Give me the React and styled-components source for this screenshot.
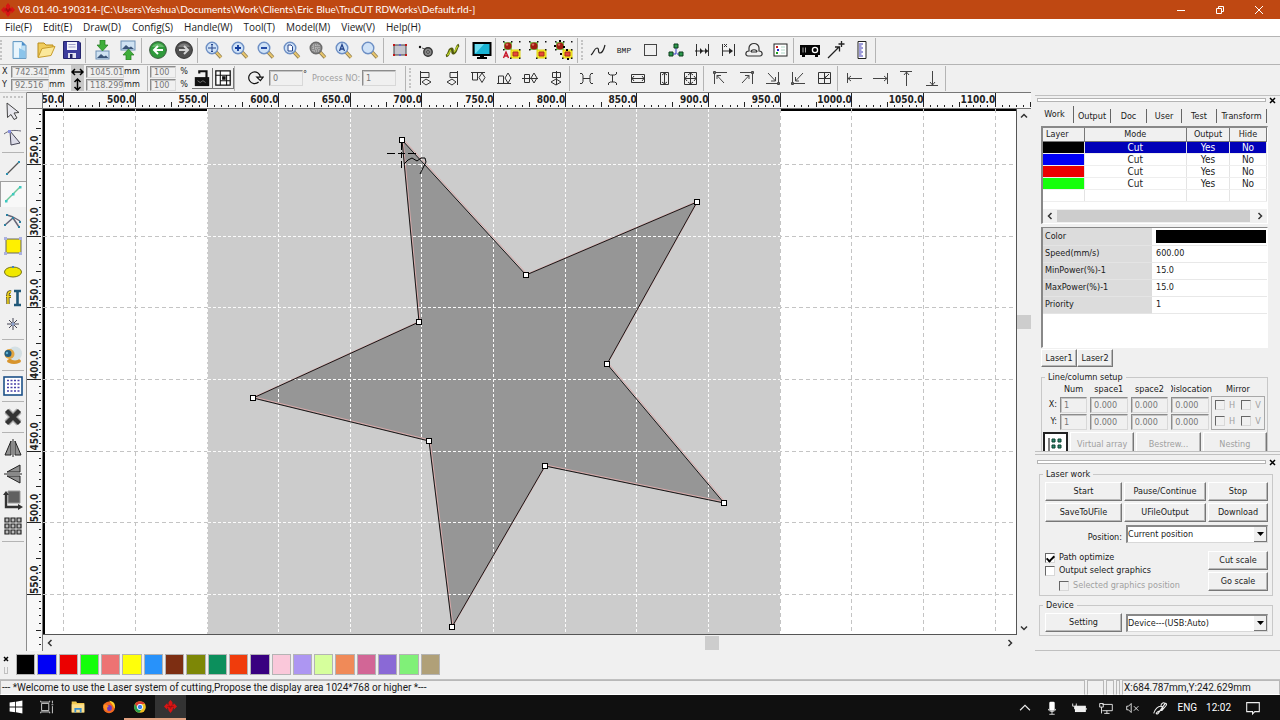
import React, { useState } from "react";
import styled, { createGlobalStyle } from "styled-components";

const UNIT = 71.65;

const palette = [
  "#000000", "#0000f5", "#eb0000", "#14ff0a", "#ed7373", "#ffff0a", "#2892fa",
  "#7d2e12", "#7d8706", "#0c8f5c", "#f03c0c", "#380080", "#fac8da", "#ad96f2",
  "#d6ff9c", "#f08a58", "#d26696", "#8a69d6", "#80f078", "#b0a078",
];

const layers = ["#000000", "#0000f5", "#eb0000", "#14ff0a"];

const star = [
  [359, 31], [483, 166], [654, 93], [564, 255], [681, 394],
  [502, 357], [409, 518], [386, 332], [210, 289], [376, 213],
];
const starPoints = star.map((p) => p.join(",")).join(" ");

const range = (from, to) => Array.from({ length: to - from }, (_, i) => from + i);

// how many ruler steps fit next to the docked panels
const stepsX = () => Math.floor((window.innerWidth - 453) / UNIT) + 1;
const stepsY = () => Math.floor((window.innerHeight - 233) / UNIT) + 1;

/* ---------- icons ---------- */

const Lens = ({ fill = "#cfe2f7", rim = "#6d8fc4", children }) => (
  <>
    <path d="M11.5 11.5l5.5 6" stroke="#8a7a52" strokeWidth="3.4" />
    <path d="M12 12l5 5.4" stroke="#e8c66c" strokeWidth="2" />
    <circle cx="8" cy="8" r="5.8" fill={fill} stroke={rim} strokeWidth="1.4" />
    {children}
  </>
);

const Select3 = ({ dots }) => (
  <>
    <path d="M2 2h8v8H2z" fill="#7cc85c" />
    <circle cx="6" cy="6" r="3.6" fill="#a01c10" />
    <circle cx="5" cy="4.600" r="1.200" fill="#d87060" />
    <path d="M9 10h9v8H9z" fill="#f5ec2c" stroke="#e0d410" />
    <path d="M11 12h5v4h-5z" fill="#e84838" stroke="#a83018" />
    <path d="M1 1h1.500v1.500H1zM9 1h1.500v1.500H9zM17 1h1.500v1.500H17zM1 9h1.500v1.500H1zM17 9h1.500v1.500H17zM8 17.500h1.500V19H8zM17 17.500h1.500V19H17z" fill="#111" />
    {dots}
  </>
);

const icons = {
  newFile: (
    <>
      <path d="M3 1.5h9l4 4v13H3z" fill="#bfe0f5" stroke="#6a9cc4" />
      <path d="M4 2.5h7v15H4z" fill="#e9f5fc" />
      <path d="M9 18V8l6 3v7z" fill="#8cc4ea" />
      <path d="M12 1.5v4h4z" fill="#4b8cc8" />
    </>
  ),
  open: (
    <>
      <path d="M2 17V3h6l2 2h7v4" fill="#f0cc5c" stroke="#b88c1c" />
      <path d="M2 17.5l4-9 13-2-4 9z" fill="#fbe89a" stroke="#c89c2c" />
    </>
  ),
  save: (
    <>
      <path d="M1.500 1.500h15.500l1.500 1.500v15.500h-17z" fill="#3c3c9c" stroke="#24246c" />
      <path d="M5 2h10v8H5z" fill="#f4f4fa" />
      <path d="M6.500 4.500h7M6.500 7h7" stroke="#a0a0c8" />
      <path d="M6 13h8v5H6z" fill="#e0e0f0" />
      <path d="M8 14h2.500v4H8z" fill="#202060" />
    </>
  ),
  importFile: (
    <>
      <rect x="4" y="11" width="13" height="8" fill="#cfe2f2" stroke="#6d8fb4" />
      <path d="M5 18l4-4 3 2.500 2-1 2.500 2.500z" fill="#3a5478" />
      <path d="M8 0h5v5h3l-5.500 6L5 5h3z" fill="#3fae3a" stroke="#237a20" strokeWidth=".7" />
    </>
  ),
  exportFile: (
    <>
      <rect x="3" y="1" width="14" height="9" fill="#cfe2f2" stroke="#6d8fb4" />
      <path d="M4 9l4-4 3 2.500 2-1 3 2.500z" fill="#3a5478" />
      <path d="M8 20h5v-5h3l-5.500-6L5 15h3z" fill="#3fae3a" stroke="#237a20" strokeWidth=".7" />
    </>
  ),
  back: (
    <>
      <circle cx="10" cy="10" r="8.400" fill="#2f9a3c" stroke="#3c5c40" />
      <path d="M4 7a7 7 0 0 1 12 0z" fill="#8cd08c" opacity=".6" />
      <path d="M15 10H6M10 6l-4 4 4 4" stroke="#fff" strokeWidth="2" />
    </>
  ),
  forward: (
    <>
      <circle cx="10" cy="10" r="8.400" fill="#505050" stroke="#303030" />
      <path d="M4 7a7 7 0 0 1 12 0z" fill="#999" opacity=".6" />
      <path d="M5 10h9M10 6l4 4-4 4" stroke="#d4d4d4" strokeWidth="2" />
    </>
  ),
  zoomPan: <Lens><path d="M8 4v8M4 8h8M7 5l1-1 1 1M7 11l1 1 1-1" stroke="#24448c" /></Lens>,
  zoomIn: <Lens><path d="M8 5v6M5 8h6" stroke="#123c9c" strokeWidth="1.800" /></Lens>,
  zoomOut: <Lens><path d="M5 8h6" stroke="#123c9c" strokeWidth="1.800" /></Lens>,
  zoomPage: <Lens><path d="M6 5h3l1.500 1.500V11H6z" fill="#fff" stroke="#24448c" /></Lens>,
  zoomFrame: <Lens fill="#8c8c8c" rim="#6c6c6c"><path d="M5 5h6v6H5zM8 5v6M5 8h6" stroke="#c8c8c8" strokeDasharray="1 1" /></Lens>,
  zoomAll: <Lens><path d="M5.500 11L8 4.500l2.500 6.500M6.500 9h3" stroke="#24448c" strokeWidth="1.300" /></Lens>,
  zoomSel: <Lens />,
  frame: (
    <>
      <rect x="4" y="5" width="12" height="10" fill="#c4c4cc" stroke="#444" />
      <path d="M3 4h2v2H3zM15 4h2v2h-2zM3 14h2v2H3zM15 14h2v2h-2z" fill="#c01818" />
      <path d="M9 4h2v2H9zM9 14h2v2H9z" fill="#6868c8" />
    </>
  ),
  gear: (
    <>
      <circle cx="4" cy="7" r="1.200" fill="#111" />
      <path d="M6 8l3 1" stroke="#555" />
      <circle cx="12" cy="12" r="4.200" fill="#888" stroke="#333" strokeWidth="1.400" />
      <circle cx="12" cy="12" r="1.300" fill="#eee" stroke="#333" />
    </>
  ),
  brush: (
    <>
      <path d="M4 16c4-1 2-6 5-7s0 5 3 4 2-7 5-8" stroke="#50580c" strokeWidth="2.600" />
      <path d="M5 15c3-1 2-4 4-5M12 12c2-1 2-5 4-6" stroke="#b4cc28" strokeWidth="1.500" />
    </>
  ),
  monitor: (
    <>
      <rect x="1.500" y="3" width="17" height="12" fill="#1ab4d4" stroke="#000" strokeWidth="2" />
      <path d="M3 4h9L4 13H3z" fill="#6cdcf0" />
      <path d="M8 15h4v2h3v2H5v-2h3z" fill="#000" />
    </>
  ),
  selA: <Select3 dots={<path d="M1.500 18l2.500-6 2.500 6M2.500 16h3" stroke="#c81428" strokeWidth="1.400" />} />,
  selB: <Select3 />,
  selC: <Select3 dots={<path d="M5 0h2v2H5zM0 5h2v2H0zM9 6h2v2H9zM12 9h2v2h-2zM6 13h2v2H6zM13 18h2v2h-2z" fill="#000" />} />,
  curve: <path d="M3 15c3-2 3-7 6-7s0 5 3 5 4-4 5-8" stroke="#222" strokeWidth="1.200" />,
  square: <rect x="4.500" y="4.500" width="12" height="11" stroke="#444" />,
  nodes: (
    <>
      <path d="M10 6v8H5M11 14h5" stroke="#3838c8" />
      <path d="M8 4h4v4H8zM3 12h4v4H3zM13 12h4v4h-4z" fill="#2c9a4c" stroke="#0c3c1c" />
    </>
  ),
  gapIn: (
    <>
      <path d="M4.500 4v12M16.500 4v12M4 11h12" stroke="#333" />
      <path d="M8 8l3 3-3 3zM5 9l-2 2 2 2zM13 8l3 3-3 3z" fill="#222" />
    </>
  ),
  gapOut: (
    <>
      <path d="M4.500 4v12M16.500 4v12M5 11h8M6 4l3 3M9 4L6 7" stroke="#333" />
      <path d="M11 8l4 3-4 3z" fill="#222" />
    </>
  ),
  weld: (
    <path d="M5 11V8a5 4.500 0 0 1 10 0v3c4 0 4 5 1 5H4c-3 0-3-5 1-5zM7 12c0-3 6-3 6 0M7 12h6" stroke="#333" strokeWidth="1.200" />
  ),
  listBox: (
    <>
      <rect x="4" y="4" width="13" height="12" fill="#fff" stroke="#222" />
      <path d="M6 6h2v2H6z" fill="#c82020" />
      <path d="M7 9h2v2H7z" fill="#2020c8" />
      <path d="M6 12h2v2H6z" fill="#20a020" />
      <path d="M11 7h4M11 10h4M11 13h4" stroke="#b0d8c8" />
    </>
  ),
  projector: (
    <>
      <path d="M0 5h20v10h-2v2h-3v-2H5v2H2v-2H0z" fill="#050505" />
      <path d="M3 7.500v5M5.500 7.500v5" stroke="#aaa" />
      <circle cx="15" cy="10" r="2.600" stroke="#fff" strokeWidth="1.300" />
    </>
  ),
  pointer: <path d="M2 18L13 7M9 7h4.500v4.500M15.500 1v6M12.500 4h6" stroke="#222" strokeWidth="1.300" />,
  rulerIcon: (
    <>
      <path d="M6 1.500h8v17H6z" fill="#fff" stroke="#222" />
      <path d="M7 4h4M7 6h2.500M7 8h4M7 10h2.500M7 12h4M7 14h2.500M7 16h4" stroke="#3c38b4" />
    </>
  ),
  // align row
  alignL: <path d="M4.500 3v14M5 4.500h8v5H5M6 14l4-3 5 3-5 3z" stroke="#333" />,
  alignR: <path d="M15.500 3v14M15 4.500H8v5h7M14 14l-4-3-5 3 5 3z" stroke="#333" />,
  alignT: <path d="M3 4.500h14M4.500 5v7h5V5M14 5l3 4.500-3 5-3-5z" stroke="#333" />,
  alignB: <path d="M3 15.500h14M4.500 15V8h5v7M14 5l3 5-3 5-3-5z" stroke="#333" />,
  alignH: <path d="M2 10.500h16M4.500 6.500h5v8h-5zM14 5l3 5-3 5-3-5z" stroke="#333" />,
  alignV: <path d="M10.500 3v14M6.500 4.500h8v5h-8zM10 11l5 3-5 3-5-3z" stroke="#333" />,
  spaceH: <path d="M4 5.500h2l1 2v6l-1 2H4M17 5.500h-2l-1 2v6l1 2h2M7 10.500h7" stroke="#333" />,
  spaceV: <path d="M6.500 4v2l2 1h4l2-1V4M6.500 17v-2l2-1h4l2 1v2M10.500 7v7" stroke="#333" />,
  sameW: <path d="M3.500 6.500h13v8h-13zM4 10.500h12M6 8l-2 2.500L6 13M14 8l2 2.500-2 2.500" stroke="#333" />,
  sameH: <path d="M6.500 4.500h8v12h-8zM10.500 5v11M8 7l2.500-2L13 7M8 14l2.500 2 2.500-2" stroke="#333" />,
  sameWH: <path d="M4.500 4.500h12v12h-12zM10.500 5v11M5 10.500h11M8 7l2.500-2L13 7M8 14l2.500 2 2.500-2M7 8l-2 2.500L7 13M14 8l2 2.500-2 2.500" stroke="#333" />,
  cornerTL: <path d="M4.500 16V4.500H17M14 15L7 7.500M7 11V7.500h4M3.500 3.500h2v2h-2z" stroke="#444" />,
  cornerTR: <path d="M16.500 16V4.500H4M6 15l7-7.500M9 7.500h4V11M15.500 3.500h2v2h-2z" stroke="#444" />,
  cornerBR: <path d="M16.500 4v11.500H4M6 5l7.500 8M9 13h4.500V9M15.500 14.500h2v2h-2z" stroke="#444" />,
  cornerBL: <path d="M4.500 4v11.500H17M15 5l-7.500 8M7.500 9v4H11M3.500 14.500h2v2h-2z" stroke="#444" />,
  centre: <path d="M4.500 4.500h12v11h-12zM10.500 4v12M4 10.500h12M15 6l-4 4M11 8v2.500h3" stroke="#333" />,
  toLeft: <path d="M3.500 5v10M18 10.500H4M7 8l-3 2.500L7 13" stroke="#444" />,
  toRight: <path d="M17.500 5v11M3 10.500h14M14 8l3 2.500-3 2.500" stroke="#444" />,
  toTop: <path d="M4 3.500h12M10.500 18V4M8 7l2.500-3L13 7" stroke="#444" />,
  toBottom: <path d="M4 17.500h12M10.500 3v14M8 14l2.500 3 2.500-3" stroke="#444" />,
  // drawing tools
  arrow: <path d="M4 2l12 9.500-5 .5 3 5-3 1.500-3-5-3.500 3z" fill="#e8e8ee" stroke="#444" />,
  nodeEdit: (
    <>
      <path d="M1 7c5-4 10-4 17-3" stroke="#667" />
      <path d="M7 4l10 12-9 2z" fill="#dcdce8" stroke="#445" />
      <rect x="5" y="3" width="3" height="3" fill="#8890e0" />
    </>
  ),
  line: (
    <>
      <path d="M4 16L16 4" stroke="#555" strokeWidth="1.200" />
      <path d="M3 15h2v2H3zM15 3h2v2h-2z" fill="#2c90b0" />
    </>
  ),
  polyline: (
    <>
      <path d="M3 17L17 3" stroke="#6cc89c" strokeWidth="1.400" />
      <path d="M2 16h2.500v2.500H2zM9 9h2.500v2.500H9zM16 2h2.500v2.500H16z" fill="#3cc8c0" />
    </>
  ),
  bezier: (
    <>
      <path d="M2 15l8-7 6 9M4 5c5 1 9 3 13 6" stroke="#667" strokeWidth="1.500" />
      <path d="M1 14h2v2H1zM3 4h2v2H3zM9 7h2v2H9zM16 11h2v2h-2zM15 16h2v2h-2z" fill="#2c80a0" />
    </>
  ),
  rect: (
    <>
      <rect x="3" y="3" width="15" height="14" fill="#fff000" stroke="#666" />
      <path d="M1 1h3v3H1zM16 1h3v3h-3zM1 16h3v3H1zM16 16h3v3h-3z" fill="#aab0e0" />
    </>
  ),
  ellipse: (
    <>
      <ellipse cx="10" cy="10" rx="8.500" ry="5" fill="#f0e800" stroke="#777418" />
      <path d="M9 4h2v2H9z" fill="#4880c0" />
    </>
  ),
  text: (
    <>
      <path d="M8 4C4 3 5 7 5 16M3 8.500h5" stroke="#4c4410" strokeWidth="3.200" />
      <path d="M8 4C4 3 5 7 5 16M3 8.500h5" stroke="#f0d420" strokeWidth="1.600" />
      <path d="M11 3h7M11 17h7M14.500 3v14" stroke="#205878" strokeWidth="2.600" />
    </>
  ),
  point: (
    <>
      <path d="M10 4v12M4 10h12M6 6l8 8M14 6l-8 8" stroke="#445" />
      <circle cx="10" cy="10" r="1.500" fill="#88a0d0" />
    </>
  ),
  camera: (
    <>
      <ellipse cx="11" cy="16" rx="7" ry="3" fill="#d8942c" />
      <circle cx="12" cy="8.500" r="7" fill="#d4e0e4" />
      <circle cx="6.500" cy="9" r="5" fill="#e0a440" />
      <circle cx="5" cy="8.500" r="3.500" fill="#205c80" />
      <circle cx="4" cy="8" r="1.200" fill="#60b0d0" />
    </>
  ),
  gridTool: (
    <>
      <rect x="1" y="1" width="18" height="18" fill="#fff" stroke="#1c5088" strokeWidth="1.600" />
      <path d="M4 4.500h13M4 8h13M4 11.500h13M4 15h13" stroke="#4840a8" strokeWidth="1.600" strokeDasharray="2 1.500" />
    </>
  ),
  remove: (
    <>
      <path d="M4 4l12 12M16 4L4 16" stroke="#aaa" strokeWidth="7" />
      <path d="M3.500 3.500l13 13M16.500 3.500l-13 13" stroke="#333" strokeWidth="4.400" />
    </>
  ),
  mirrorH: <path d="M8 3v14H2zM12 3v14h6zM10 1v18" fill="#909090" stroke="#222" />,
  mirrorV: <path d="M17 8V1L4 8zM17 12v7L4 12zM1 10h18" fill="#909090" stroke="#222" />,
  corner: (
    <>
      <path d="M5 1h12v12H5z" fill="#606060" stroke="#999" />
      <path d="M3 3v14h14" stroke="#333" strokeWidth="2.400" />
      <path d="M0 5l3-4 3 4zM15 14l5 3-5 3z" fill="#333" />
    </>
  ),
  array: (
    <path
      d="M2 2h4v4H2zM8 2h4v4H8zM14 2h4v4h-4zM2 8h4v4H2zM8 8h4v4H8zM14 8h4v4h-4zM2 14h4v4H2zM8 14h4v4H8zM14 14h4v4h-4z"
      fill="#bbb" stroke="#222" strokeWidth="1.200"
    />
  ),
  rotate: <path d="M14 14.500A6.500 6.500 0 1 1 16 9M19 9l-3 4-4-4z" stroke="#111" strokeWidth="1.300" />,
  lock: (
    <>
      <path d="M7 5V2.500h8V10" stroke="#111" strokeWidth="2.400" />
      <path d="M2 9h16v10H2z" fill="#111" />
      <path d="M5 13l3 2 3-2 3 2" stroke="#777" />
    </>
  ),
  anchor: (
    <>
      <path d="M2 2h16v16H2z" fill="#fff" stroke="#111" strokeWidth="1.400" />
      <path d="M2 7h16M7 2v16M14 7v11M7 13h11" stroke="#111" strokeWidth="1.200" />
      <path d="M9 8h4v4H9z" fill="#111" />
    </>
  ),
  logo: (
    <>
      <path d="M10 0l3 3.500V7h2V4.500l5 5.500-5 5v-3h-1l-1 4-3 4-3-4-1-4H5v3l-5-5 5-5.500V7h2V3.500z" fill="#d81414" />
      <path d="M5 10h10M7 7l3 6 3-6" stroke="#8c0c0c" />
    </>
  ),
  // task bar
  windows: <path d="M2 4.500l7-1v6H2zM10 3.300l8-1.300v7.500h-8zM2 10.500h7v6l-7-1zM10 10.500h8V18l-8-1.300z" fill="#fff" />,
  taskView: <path d="M4 6h8v8H4zM3 3v1.500h10V3M3 17v-1.500h10V17M16 3v3M16 9v8M15 7.500h2" stroke="#ddd" />,
  folder: (
    <>
      <path d="M3 4h5l1 1.500h8V16H3z" fill="#f0c850" />
      <path d="M3 7h14v9H3z" fill="#fce08c" />
      <path d="M6 16v-5h8v5h-2v-3H8v3z" fill="#3c90d0" />
    </>
  ),
  firefox: (
    <>
      <circle cx="10" cy="10.500" r="6.500" fill="#f06820" />
      <path d="M10 3c5 0 8 4 6 9-1-3-2-5-6-9z" fill="#ffd028" />
      <circle cx="10" cy="11" r="3.200" fill="#7038c0" />
      <path d="M4 7c2 0 4 1 6 2-2 1-3 3-1 5-4 0-6-3-5-7z" fill="#ff9020" />
    </>
  ),
  chrome: (
    <>
      <circle cx="10" cy="10" r="6.500" fill="#f0c020" />
      <path d="M4.400 6.700A6.500 6.500 0 0 1 15.600 6.700H10L7 11.500z" fill="#dc3c30" />
      <path d="M4.400 6.700a6.500 6.500 0 0 0 4.800 9.800l3-4.500H7.500z" fill="#28a050" />
      <circle cx="10" cy="10" r="3" fill="#3c80e8" stroke="#fff" />
    </>
  ),
  up: <path d="M4.500 12.500L10 7l5.500 5.500" stroke="#eee" strokeWidth="1.200" />,
  mic: (
    <>
      <rect x="7" y="3" width="6" height="10" rx="1.500" fill="#fff" />
      <path d="M6 11c0 4 8 4 8 0M10 14v3M7 17h6" stroke="#ddd" />
    </>
  ),
  battery: (
    <>
      <rect x="6" y="8" width="11" height="6" fill="#eee" stroke="#fff" />
      <path d="M18 10v2M3 5v3h4V5M5 8v3h3" stroke="#eee" />
    </>
  ),
  network: <path d="M6 6h11v7H6M11 13v3M8 16h6M3 5h4v4H3zM5 9v7" stroke="#eee" />,
  mute: <path d="M3 8h2l3-3v10l-3-3H3zM11 8l5 5M16 8l-5 5" stroke="#eee" />,
  pen: <path d="M3 16c2-6 5-8 8-8s3 4-1 5-6 5-2 3L15 6c1-2 3-1 2 1l-5 6M11 8c0-4 4-5 5-2" stroke="#eee" strokeWidth="1.200" />,
  notice: <path d="M3 4h14v10h-5l-2.500 2.500V14H3z" stroke="#eee" strokeWidth="1.200" />,
};

const Icon = ({ name, size = 20 }) => (
  <Glyph viewBox="0 0 20 20" width={size} height={size} fill="none" aria-hidden="true">
    {icons[name]}
  </Glyph>
);

const Tools = ({ names }) =>
  names.map((name) => (
    <ToolButton key={name} aria-label={name}>
      {name === "bmp" ? <Bmp>BMP</Bmp> : <Icon name={name} />}
    </ToolButton>
  ));

const ToolGroups = ({ groups }) =>
  groups.map((names) => (
    <React.Fragment key={names[0]}>
      <Tools names={names} />
      <Sep />
    </React.Fragment>
  ));

/* ---------- top bars ---------- */

const TitleBar = () => (
  <Title>
    <Icon name="logo" size={14} />
    <h1>V8.01.40-190314-[C:\Users\Yeshua\Documents\Work\Clients\Eric Blue\TruCUT RDWorks\Default.rld-]</h1>
    <WindowButton aria-label="Minimize">
      <svg width="10" height="10" fill="none" stroke="#fff"><path d="M1 5.500h8" /></svg>
    </WindowButton>
    <WindowButton aria-label="Restore">
      <svg width="10" height="10" fill="none" stroke="#fff"><path d="M1.500 3.500h5v5h-5zM3.500 3V1.500h5v5H7" /></svg>
    </WindowButton>
    <WindowButton aria-label="Close">
      <svg width="10" height="10" fill="none" stroke="#fff"><path d="M1 1l8 8M9 1L1 9" /></svg>
    </WindowButton>
  </Title>
);

const menus = ["File(F)", "Edit(E)", "Draw(D)", "Config(S)", "Handle(W)", "Tool(T)", "Model(M)", "View(V)", "Help(H)"];

const MainTools = () => (
  <Toolbar>
    <Grip />
    <ToolGroups
      groups={[
        ["newFile", "open", "save"],
        ["importFile", "exportFile"],
        ["back", "forward"],
        ["zoomPan", "zoomIn", "zoomOut", "zoomPage", "zoomFrame", "zoomAll", "zoomSel"],
        ["frame", "gear", "brush"],
        ["monitor"],
        ["selA", "selB", "selC"],
      ]}
    />
    <Grip $slim />
    <ToolGroups
      groups={[
        ["curve", "bmp", "square", "nodes", "gapIn", "gapOut", "weld", "listBox"],
        ["projector", "pointer", "rulerIcon"],
      ]}
    />
  </Toolbar>
);

const ObjectTools = () => (
  <Toolbar>
    <Fields $cols="9px 38px 14px">
      <label htmlFor="posX">X</label>
      <Field id="posX" defaultValue="742.341" />
      <span>mm</span>
      <label htmlFor="posY">Y</label>
      <Field id="posY" defaultValue="92.516" />
      <span>mm</span>
    </Fields>
    <SizeIcons viewBox="0 0 13 26" width="13" height="26">
      <path d="M2 7h9M4 4L1 7l3 3M9 4l3 3-3 3M6.500 15v9M3.500 17l3-3 3 3M3.500 22l3 3 3-3" />
    </SizeIcons>
    <Fields $cols="38px 14px">
      <Field aria-label="Width" defaultValue="1045.01" />
      <span>mm</span>
      <Field aria-label="Height" defaultValue="118.299" />
      <span>mm</span>
    </Fields>
    <Gap />
    <Fields $cols="26px 16px">
      <Field aria-label="Width scale" defaultValue="100" />
      <Percent>%</Percent>
      <Field aria-label="Height scale" defaultValue="100" />
      <Percent>%</Percent>
    </Fields>
    <LockButton aria-label="Lock ratio"><Icon name="lock" size={18} /></LockButton>
    <LockButton aria-label="Anchor"><Icon name="anchor" size={18} /></LockButton>
    <Sep />
    <RotateBox>
      <Icon name="rotate" size={18} />
      <Field $wide aria-label="Angle" defaultValue="0" />
      <Degree>°</Degree>
      <label htmlFor="process">Process NO:</label>
      <Field $wide id="process" defaultValue="1" />
    </RotateBox>
    <Sep />
    <Grip $slim />
    <ToolGroups
      groups={[
        ["alignL", "alignR", "alignT", "alignB", "alignH", "alignV"],
        ["spaceH", "spaceV", "sameW", "sameH", "sameWH"],
        ["cornerTL", "cornerTR", "cornerBR", "cornerBL", "centre"],
        ["toLeft", "toRight", "toTop", "toBottom"],
      ]}
    />
  </Toolbar>
);

const DrawTools = () => (
  <Side>
    <SideGrip />
    <Tools names={["arrow", "nodeEdit"]} />
    <SideSep />
    <Tools names={["line"]} />
    <ToolButton $active aria-label="polyline"><Icon name="polyline" /></ToolButton>
    <Tools names={["bezier", "rect", "ellipse", "text", "point"]} />
    <SideSep />
    <Tools names={["camera"]} />
    <SideSep />
    <Tools names={["gridTool"]} />
    <SideSep />
    <Tools names={["remove"]} />
    <SideSep />
    <Tools names={["mirrorH", "mirrorV", "corner", "array"]} />
    <SideSep />
  </Side>
);

/* ---------- work area ---------- */

const TopRuler = () => (
  <RulerSvg width="100%" height="16">
    {range(-22, stepsX() * 10 + 10).map((i) => {
      const x = 164 + (i * UNIT) / 10;
      const len = i % 10 === 0 ? 14 : i % 5 === 0 ? 5 : 2;
      return <rect key={i} x={Math.floor(x)} y={14 - len} width="1" height={len} />;
    })}
    {range(-2, stepsX()).map((k) => (
      <text key={k} x={164 + k * UNIT} y="10" textAnchor="end">{(550 + k * 50).toFixed(1)}</text>
    ))}
    <rect y="15" width="100%" height="1" fill="#777" />
  </RulerSvg>
);

const LeftRuler = () => (
  <RulerSvg width="16" height="100%">
    {range(-7, stepsY() * 10 + 10).map((i) => {
      const y = 55 + (i * UNIT) / 10;
      const len = i % 10 === 0 ? 14 : i % 5 === 0 ? 5 : 2;
      return <rect key={i} x={14 - len} y={Math.round(y)} width={len} height="1" />;
    })}
    {range(0, stepsY()).map((k) => (
      <text key={k} transform={`translate(11 ${55 + k * UNIT}) rotate(-90)`}>{(250 + k * 50).toFixed(1)}</text>
    ))}
    <rect x="15" width="1" height="100%" fill="#777" />
  </RulerSvg>
);

const GridLines = ({ stroke, dash }) => (
  <g stroke={stroke} strokeDasharray={dash}>
    {range(-2, stepsX()).map((k) => {
      const x = Math.floor(164 + k * UNIT) + 0.5;
      return <line key={`v${k}`} x1={x} x2={x} y1="0" y2="100%" />;
    })}
    {range(0, stepsY()).map((k) => {
      const y = Math.round(55 + k * UNIT) + 0.5;
      return <line key={`h${k}`} x1="0" x2="100%" y1={y} y2={y} />;
    })}
  </g>
);

const Stage = () => (
  <StageSvg>
    <defs>
      <clipPath id="page"><rect x="164" y="0" width="573" height="100%" /></clipPath>
    </defs>
    <rect width="100%" height="2" fill="#000" />
    <rect width="2" height="100%" fill="#000" />
    <GridLines stroke="#c4c4c4" dash="4 3" />
    <rect x="164" width="573" height="100%" fill="#cccccc" />
    <polygon points={starPoints} fill="#969696" />
    <polygon points={starPoints} stroke="#d8a8a8" fill="none" transform="translate(1 -1)" />
    <g clipPath="url(#page)"><GridLines stroke="#fbfbfb" dash="3 2" /></g>
    <polygon points={starPoints} stroke="#181414" fill="none" />
    {star.map(([x, y]) => (
      <rect key={x} x={x - 2.5} y={y - 2.5} width="5" height="5" fill="#fff" stroke="#000" />
    ))}
    <g stroke="#000" fill="none">
      <path d="M344 44.500h8M355 44.500h7M365 44.500h8M358.500 34v7M358.500 43v6M358.500 52v7" />
      <path d="M361 55l4-4 4-2 5 3 4-3h4l1 4-6 12" />
    </g>
  </StageSvg>
);

const Chevron = ({ turn }) => (
  <svg width="8" height="8" viewBox="0 0 8 8" fill="none" stroke="#333" strokeWidth="1.500">
    <path d="M5.500 1L2.500 4l3 3" transform={`rotate(${turn} 4 4)`} />
  </svg>
);

const WorkArea = () => (
  <Area>
    <Corner />
    <TopCell><TopRuler /></TopCell>
    <LeftCell><LeftRuler /></LeftCell>
    <StageCell><Stage /></StageCell>
    <VScroll>
      <ScrollButton aria-label="Scroll up"><Chevron turn={90} /></ScrollButton>
      <Space $grow={192} />
      <Thumb />
      <Space $grow={292} />
      <ScrollButton aria-label="Scroll down"><Chevron turn={-90} /></ScrollButton>
    </VScroll>
    <HScroll>
      <ScrollButton aria-label="Scroll left"><Chevron turn={0} /></ScrollButton>
      <Space $grow={647} />
      <Thumb />
      <Space $grow={284} />
      <ScrollButton aria-label="Scroll right"><Chevron turn={180} /></ScrollButton>
    </HScroll>
  </Area>
);

/* ---------- right side ---------- */

const DockBar = ({ slim }) => (
  <Dock $slim={slim}>
    <DockLines />
    <CloseButton aria-label="Close panel">
      <svg width="7" height="7" stroke="#000" strokeWidth="1.500"><path d="M1 1l5 5M6 1L1 6" /></svg>
    </CloseButton>
  </Dock>
);

const LayerTable = () => (
  <Sunken>
    <Layers>
      <colgroup>
        <col width="41" />
        <col />
        <col width="43" />
        <col width="37" />
      </colgroup>
      <thead>
        <tr><th>Layer</th><th>Mode</th><th>Output</th><th>Hide</th></tr>
      </thead>
      <tbody>
        {layers.map((color, i) => (
          <LayerRow key={color} $selected={i === 0}>
            <Swatch $color={color} />
            <td>Cut</td>
            <td>Yes</td>
            <td>No</td>
          </LayerRow>
        ))}
        <LayerRow><td /><td /><td /><td /></LayerRow>
      </tbody>
    </Layers>
    <ListScroll>
      <ScrollButton aria-label="Scroll left"><Chevron turn={0} /></ScrollButton>
      <ListThumb />
      <ScrollButton aria-label="Scroll right"><Chevron turn={180} /></ScrollButton>
    </ListScroll>
  </Sunken>
);

const params = [
  ["Color", null],
  ["Speed(mm/s)", "600.00"],
  ["MinPower(%)-1", "15.0"],
  ["MaxPower(%)-1", "15.0"],
  ["Priority", "1"],
];

const tabs = [
  ["Work", 38],
  ["Output", 37],
  ["Doc", 36],
  ["User", 35],
  ["Test", 35],
  ["Transform", 50],
];

const ArrayRow = ({ axis }) => (
  <>
    <Axis>{axis}:</Axis>
    <Field $tall aria-label={`${axis} num`} defaultValue="1" />
    <Field $tall aria-label={`${axis} space1`} defaultValue="0.000" />
    <Field $tall aria-label={`${axis} space2`} defaultValue="0.000" />
    <Field $tall aria-label={`${axis} dislocation`} defaultValue="0.000" />
  </>
);

const MirrorRow = () => (
  <div>
    <Check $off><input type="checkbox" disabled />H</Check>
    <Check $off><input type="checkbox" disabled />V</Check>
  </div>
);

const WorkPanel = () => {
  const [tab, setTab] = useState("Work");
  return (
    <Panel $grow>
      <DockBar slim />
      <Tabs role="tablist">
        {tabs.map(([name, width]) => (
          <Tab key={name} role="tab" $width={width} $on={tab === name} aria-selected={tab === name} onClick={() => setTab(name)}>
            {name}
          </Tab>
        ))}
      </Tabs>
      <PanelBody>
        <LayerTable />
        <Sunken $props>
          <Params>
            <tbody>
              {params.map(([name, value]) => (
                <tr key={name}>
                  <th scope="row">{name}</th>
                  <td>{value === null ? <ColorBar /> : value}</td>
                </tr>
              ))}
            </tbody>
          </Params>
        </Sunken>
        <LaserTabs>
          <Button>Laser1</Button>
          <Button>Laser2</Button>
        </LaserTabs>
        <Group>
          <legend>Line/column setup</legend>
          <ArrayGrid>
            <Inputs>
              <span />
              <span>Num</span>
              <span>space1</span>
              <span>space2</span>
              <Cut><span>Dislocation</span></Cut>
              <ArrayRow axis="X" />
              <ArrayRow axis="Y" />
            </Inputs>
            <Mirror>
              <span>Mirror</span>
              <MirrorBox>
                <MirrorRow />
                <MirrorRow />
              </MirrorBox>
            </Mirror>
          </ArrayGrid>
          <ArrayButtons>
            <ArrayIcon aria-label="Array direction">
              <svg width="18" height="18" viewBox="0 0 18 18" fill="none">
                <path d="M2 3v14M2 17h14" stroke="#000" />
                <path d="M5 4h3v3H5zM11 4h3v3h-3zM5 10h3v3H5zM11 10h3v3h-3z" fill="#2c8c6c" stroke="#0c4030" />
                <path d="M1 16h3v2H1z" fill="#0000c8" />
              </svg>
            </ArrayIcon>
            <Button disabled>Virtual array</Button>
            <Button disabled>Bestrew...</Button>
            <Button disabled>Nesting</Button>
          </ArrayButtons>
        </Group>
      </PanelBody>
    </Panel>
  );
};

const Combo = ({ id, label, value }) => (
  <ComboBox>
    <select id={id} aria-label={label}>
      <option>{value}</option>
    </select>
    <ComboArrow><svg width="7" height="4"><path d="M0 0h7L3.500 4z" /></svg></ComboArrow>
  </ComboBox>
);

const LaserPanel = () => (
  <Panel>
    <DockBar />
    <LaserBody>
      <Group $pad>
        <legend>Laser work</legend>
        <LaserGrid>
          <Button>Start</Button>
          <Button>Pause/Continue</Button>
          <Button>Stop</Button>
          <Button>SaveToUFile</Button>
          <Button>UFileOutput</Button>
          <Button>Download</Button>
        </LaserGrid>
        <PositionRow>
          <label htmlFor="position">Position:</label>
          <Combo id="position" value="Current position" />
        </PositionRow>
        <Options>
          <div>
            <Check><input type="checkbox" defaultChecked />Path optimize</Check>
            <Check><input type="checkbox" />Output select graphics</Check>
            <Check $off $indent><input type="checkbox" disabled />Selected graphics position</Check>
          </div>
          <Scales>
            <Button>Cut scale</Button>
            <Button>Go scale</Button>
          </Scales>
        </Options>
      </Group>
      <Group $pad>
        <legend>Device</legend>
        <DeviceRow>
          <Button>Setting</Button>
          <Combo label="Device" value="Device---(USB:Auto)" />
        </DeviceRow>
      </Group>
    </LaserBody>
  </Panel>
);

/* ---------- bottom ---------- */

const PaletteBar = () => (
  <PaletteRow>
    <PaletteGrip>
      <CloseButton aria-label="Close palette">
        <svg width="6" height="6" stroke="#000" strokeWidth="1.500"><path d="M1 1l4 4M5 1L1 5" /></svg>
      </CloseButton>
      <i />
    </PaletteGrip>
    <Colors>
      {palette.map((color) => (
        <ColorButton key={color} $color={color} aria-label={color} />
      ))}
    </Colors>
  </PaletteRow>
);

const Taskbar = () => (
  <Tasks>
    <Task aria-label="Start"><Icon name="windows" size={16} /></Task>
    <Task aria-label="Task view"><Icon name="taskView" size={18} /></Task>
    <Task aria-label="Files"><Icon name="folder" size={18} /></Task>
    <Task aria-label="Firefox"><Icon name="firefox" size={18} /></Task>
    <Task aria-label="Chrome" $open><Icon name="chrome" size={18} /></Task>
    <Task aria-label="RDWorks" $open $active><Icon name="logo" size={13} /></Task>
    <Tray>
      {["up", "mic", "battery", "network", "mute", "pen"].map((name) => (
        <TrayButton key={name} aria-label={name}><Icon name={name} size={18} /></TrayButton>
      ))}
      <span>ENG</span>
      <time>12:02</time>
      <TrayButton aria-label="Notifications"><Icon name="notice" size={18} /></TrayButton>
    </Tray>
  </Tasks>
);

const App = () => {
  return (
    <Shell>
      <GlobalStyle />
      <TitleBar />
      <Menu>
        {menus.map((name) => (
          <button key={name}>{name}</button>
        ))}
      </Menu>
      <MainTools />
      <ObjectTools />
      <Main>
        <DrawTools />
        <WorkArea />
        <Right>
          <WorkPanel />
          <LaserPanel />
        </Right>
      </Main>
      <PaletteBar />
      <Status>
        <StatusCell $grow>--- *Welcome to use the Laser system of cutting,Propose the display area 1024*768 or higher *---</StatusCell>
        <StatusCell $width={17} />
        <StatusCell $width={8} />
        <StatusCell $width={4} />
        <StatusCell $width={158}>X:684.787mm,Y:242.629mm</StatusCell>
      </Status>
      <Taskbar />
    </Shell>
  );
};

export default App;

const GlobalStyle = createGlobalStyle`
  * {
    box-sizing: border-box;
  }
  body {
    margin: 0;
    background: #f0f0f0;
    font-family: "DejaVu Sans Condensed", "DejaVu Sans", sans-serif;
    font-size: 9px;
    line-height: 11px;
    color: #1a1a1a;
  }
  button, input, select {
    font: inherit;
    color: inherit;
    margin: 0;
    padding: 0;
    border: none;
    border-radius: 0;
    background: none;
  }
`;

const Shell = styled.div`
  display: flex;
  flex-direction: column;
  height: 100vh;
  overflow: hidden;
`;

const Glyph = styled.svg`
  display: block;
  flex: none;
`;

const Title = styled.header`
  display: flex;
  align-items: center;
  flex: none;
  height: 19px;
  padding-left: 1px;
  background: #bf4812;
  color: #fff;

  h1 {
    flex: 1;
    margin: 0 0 0 3px;
    font-family: Lato, sans-serif;
    font-size: 10px;
    font-weight: 400;
    white-space: nowrap;
  }
`;

const WindowButton = styled.button`
  display: flex;
  justify-content: center;
  align-items: center;
  width: 39px;
  height: 19px;

  &:last-child {
    margin-right: 2px;
  }
`;

const Menu = styled.nav`
  display: flex;
  gap: 11px;
  flex: none;
  height: 17px;
  padding-left: 5px;
  background: #fff;
  font-family: "Open Sans", sans-serif;
  font-size: 10px;
`;

const Toolbar = styled.div`
  display: flex;
  align-items: center;
  flex: none;
  height: 28px;
  padding-bottom: 1px;
  border-top: 1px solid #b4b4b4;
  overflow: hidden;
`;

const ToolButton = styled.button`
  display: flex;
  justify-content: center;
  align-items: center;
  flex: none;
  width: 26px;
  height: 26px;
  background: ${(p) => (p.$active ? "#f8f8f8" : "none")};
  box-shadow: ${(p) => (p.$active ? "inset 1px 1px 0 #a0a0a0" : "none")};
`;

const Bmp = styled.span`
  font-family: "Liberation Mono", monospace;
  font-size: 8px;
`;

const Sep = styled.span`
  flex: none;
  width: 4px;
  height: 25px;
  border-left: 1px solid #b4b4b4;
`;

const Grip = styled.span`
  flex: none;
  width: ${(p) => (p.$slim ? 4 : 7)}px;
  height: 20px;
  border-left: 2px dotted #c4c4c4;
`;

const Gap = styled.span`
  width: 10px;
  height: 25px;
  border-right: 1px solid #b4b4b4;
`;

const Fields = styled.div`
  display: grid;
  grid-template-columns: ${(p) => p.$cols};
  grid-auto-rows: 13px;
  align-items: center;
  flex: none;
  padding-left: 2px;
`;

const Field = styled.input`
  width: ${(p) => (p.$wide ? "34px" : "100%")};
  min-width: 0;
  height: ${(p) => (p.$tall ? 16 : p.$wide ? 16 : 12)}px;
  padding-left: 3px;
  border: 1px solid #d8d8d8;
  border-top-color: #8c8c8c;
  border-left-color: #8c8c8c;
  box-shadow: inset 1px 1px 0 #c4c4c4;
  color: #777;
`;

const SizeIcons = styled.svg`
  flex: none;
  margin: 0 0 0 8px;
  background: #c8c8c8;
  fill: none;
  stroke: #000;
  stroke-width: 1.5;
`;

const Percent = styled.span`
  text-align: center;
`;

const LockButton = styled.button`
  display: flex;
  justify-content: center;
  align-items: center;
  flex: none;
  width: 21px;
  height: 21px;
  border-right: 1px solid #777;
  border-bottom: 1px solid #777;
`;

const RotateBox = styled.div`
  display: flex;
  align-items: center;
  flex: none;
  width: 167px;
  padding-left: 8px;

  label {
    width: 50px;
    color: #a0a0a0;
    white-space: nowrap;
  }
  svg {
    margin-right: 5px;
  }
`;

const Degree = styled.span`
  align-self: flex-start;
  width: 9px;
`;

const Main = styled.main`
  display: flex;
  flex: 1;
  min-height: 0;
`;

const Side = styled.div`
  display: flex;
  flex-direction: column;
  align-items: center;
  flex: none;
  width: 27px;
  border-right: 1px solid #8c8c8c;
  border-top: 1px solid #c8c8c8;
`;

const SideGrip = styled.span`
  width: 20px;
  height: 5px;
  flex: none;
  border-bottom: 2px dotted #c4c4c4;
`;

const SideSep = styled.span`
  flex: none;
  width: 22px;
  height: 5px;
  background: linear-gradient(#b4b4b4, #b4b4b4) center / 100% 1px no-repeat;
`;

const Area = styled.section`
  display: grid;
  grid-template-columns: 16px 1fr 14px;
  grid-template-rows: 16px 1fr 16px;
  flex: 1;
  min-width: 0;
  border-top: 1px solid #777;
`;

const Corner = styled.div`
  border-right: 1px solid #777;
  border-bottom: 1px solid #777;
`;

const RulerSvg = styled.svg`
  display: block;
  fill: #222;

  text {
    font-size: 10px;
    font-weight: 700;
  }
`;

const TopCell = styled.div`
  grid-column: 2 / 4;
  min-width: 0;
  background: #f8f8f8;
  overflow: hidden;
`;

const LeftCell = styled.div`
  grid-column: 1;
  grid-row: 2 / 4;
  min-height: 0;
  background: #f8f8f8;
  overflow: hidden;
`;

const StageCell = styled.div`
  display: flex;
  min-width: 0;
  min-height: 0;
  background: #fff;
  border-right: 1px solid #555;
  border-bottom: 1px solid #555;
  overflow: hidden;
`;

const StageSvg = styled.svg`
  display: block;
  width: 100%;
  height: 100%;
`;

const VScroll = styled.div`
  display: flex;
  flex-direction: column;
  align-items: center;
`;

const HScroll = styled.div`
  display: flex;
  align-items: center;
  grid-column: 2;
`;

const ScrollButton = styled.button`
  display: flex;
  justify-content: center;
  align-items: center;
  flex: none;
  width: 14px;
  height: 14px;
`;

const Thumb = styled.span`
  flex: none;
  width: 14px;
  height: 14px;
  background: #cdcdcd;
`;

const Space = styled.span`
  flex: ${(p) => p.$grow};
`;

const Right = styled.aside`
  display: flex;
  flex-direction: column;
  flex: none;
  width: 249px;
  padding: 3px 0 0 4px;
`;

const Panel = styled.section`
  display: flex;
  flex-direction: column;
  flex: ${(p) => (p.$grow ? "1" : "none")};
  min-height: 0;
  overflow: hidden;
  border-top: 1px solid #c0c0c0;
  border-bottom: 1px solid #c0c0c0;
  padding-bottom: ${(p) => (p.$grow ? 0 : 10)}px;
  margin-bottom: ${(p) => (p.$grow ? 2 : 0)}px;
`;

const Dock = styled.div`
  display: flex;
  align-items: center;
  flex: none;
  height: ${(p) => (p.$slim ? 8 : 14)}px;
  padding: 0 1px 0 2px;
`;

const DockLines = styled.span`
  flex: 1;
  height: 4px;
  border: 1px solid #b4b4b4;
  background: #fff;
`;

const CloseButton = styled.button`
  display: flex;
  justify-content: center;
  align-items: center;
  width: 13px;
  height: 8px;
`;

const Tabs = styled.div`
  display: flex;
  align-items: flex-end;
  flex: none;
  height: 19px;
  padding-left: 1px;
  margin-bottom: 3px;
`;

const Tab = styled.button`
  flex: none;
  width: ${(p) => p.$width}px;
  height: ${(p) => (p.$on ? 17 : 14)}px;
  border-right: 1px solid #666;
  text-align: center;
`;

const PanelBody = styled.div`
  display: flex;
  flex-direction: column;
  flex: none;
  padding: 0 12px 0 6px;
`;

const Sunken = styled.div`
  display: flex;
  flex-direction: column;
  height: ${(p) => (p.$props ? 121 : 98)}px;
  margin-bottom: ${(p) => (p.$props ? 1 : 3)}px;
  border: 1px solid #fff;
  border-top: ${(p) => (p.$props ? 1 : 2)}px solid #888;
  border-left: 2px solid #888;
  background: #fff;
`;

const Layers = styled.table`
  width: 100%;
  table-layout: fixed;
  border-collapse: collapse;
  text-align: center;

  th {
    height: 13px;
    padding: 0;
    border-right: 1px solid #777;
    border-bottom: 1px solid #777;
    background: #f0f0f0;
    font-weight: 400;
  }
  th:first-child {
    text-align: left;
    padding-left: 3px;
  }
  td {
    height: 12px;
    padding: 0;
    border-right: 1px solid #e4e4e4;
    border-bottom: 1px solid #eee;
    font-size: 10px;
    line-height: 11px;
  }
`;

const LayerRow = styled.tr`
  background: ${(p) => (p.$selected ? "#0000b8" : "#fff")};
  color: ${(p) => (p.$selected ? "#fff" : "#222")};
`;

const Swatch = styled.td`
  background: ${(p) => p.$color};
`;

const ListScroll = styled.div`
  display: flex;
  margin-top: auto;
  height: 14px;
  background: #f0f0f0;
`;

const ListThumb = styled.span`
  flex: 1;
  margin: 1px 3px 1px 0;
  background: #cdcdcd;
`;

const Params = styled.table`
  width: 100%;
  border-collapse: collapse;

  th {
    width: 109px;
    height: 17px;
    padding: 0 0 0 2px;
    background: #dcdcdc;
    border-bottom: 1px solid #e4e4e4;
    font-weight: 400;
    text-align: left;
  }
  td {
    padding: 0 1px 0 4px;
    border-bottom: 1px solid #e8e8e8;
  }
`;

const ColorBar = styled.div`
  height: 13px;
  background: #000;
`;

const Button = styled.button`
  height: 19px;
  border: 1px solid #fff;
  border-right-color: #777;
  border-bottom-color: #777;
  box-shadow: inset -1px -1px 0 #b8b8b8;
  background: #f0f0f0;
  white-space: nowrap;

  &:disabled {
    color: #a0a0a0;
  }
`;

const LaserTabs = styled.div`
  display: flex;

  ${Button} {
    width: 36px;
    height: 18px;
  }
`;

const Group = styled.fieldset`
  min-width: 0;
  margin: ${(p) => (p.$pad ? "0 0 4px" : "5px 0 0")};
  padding: ${(p) => (p.$pad ? "2px 4px 3px 5px" : "0 2px 0 3px")};
  border: 1px solid #c8c8c8;

  legend {
    padding: 0 3px;
    margin-left: ${(p) => (p.$pad ? -2 : 0)}px;
    line-height: 11px;
  }
`;

const ArrayGrid = styled.div`
  display: grid;
  grid-template-columns: 1fr 54px;
  gap: 2px;
`;

const Inputs = styled.div`
  display: grid;
  grid-template-columns: 12px 27px repeat(3, minmax(0, 1fr));
  grid-template-rows: 13px 17px 17px;
  column-gap: 3px;
  align-items: center;
  text-align: center;
`;

const Cut = styled.div`
  display: flex;
  justify-content: flex-end;
  margin-right: -3px;
  overflow: hidden;
`;

const Axis = styled.span`
  text-align: right;
`;

const Mirror = styled.div`
  display: flex;
  flex-direction: column;
  text-align: center;
  line-height: 13px;
`;

const MirrorBox = styled.div`
  display: flex;
  flex-direction: column;
  justify-content: space-around;
  flex: 1;
  border: 1px solid #a8a8a8;

  div {
    display: flex;
    justify-content: space-around;
  }
`;

const Check = styled.label`
  display: flex;
  align-items: center;
  gap: 4px;
  height: 13px;
  margin-left: ${(p) => (p.$indent ? 14 : 0)}px;
  margin-top: ${(p) => (p.$indent ? 2 : 0)}px;
  color: ${(p) => (p.$off ? "#a0a0a0" : "inherit")};
  white-space: nowrap;

  input {
    appearance: none;
    display: flex;
    justify-content: center;
    flex: none;
    width: 10px;
    height: 10px;
    border: 1px solid #d8d8d8;
    border-top-color: #666;
    border-left-color: #666;
    background: ${(p) => (p.$off ? "#f0f0f0" : "#fff")};
  }
  input:checked::after {
    content: "";
    width: 3px;
    height: 6px;
    border: solid #000;
    border-width: 0 2px 2px 0;
    transform: rotate(45deg);
  }
`;

const ArrayButtons = styled.div`
  display: grid;
  grid-template-columns: 25px 1fr 1fr 1fr;
  gap: 2px;
  margin: 2px -2px 0;

  ${Button} {
    height: 24px;
  }
`;

const ArrayIcon = styled.button`
  display: flex;
  justify-content: center;
  padding-top: 1px;
  border: 2px solid #222;
  background: #fff;
`;

const LaserBody = styled.div`
  padding: 0 7px 0 4px;
`;

const LaserGrid = styled.div`
  display: grid;
  grid-template-columns: 77px 1fr 60px;
  gap: 2px;
`;

const PositionRow = styled.div`
  display: flex;
  justify-content: flex-end;
  align-items: flex-end;
  gap: 4px;
  margin-top: 3px;
`;

const ComboBox = styled.div`
  display: flex;
  width: 142px;
  height: 18px;
  border: 1px solid #d8d8d8;
  border-top: 2px solid #888;
  border-left: 2px solid #888;
  background: #fff;

  select {
    appearance: none;
    flex: 1;
    min-width: 0;
  }
`;

const ComboArrow = styled.span`
  display: flex;
  justify-content: center;
  align-items: center;
  width: 13px;
  background: #f0f0f0;
  border-right: 1px solid #777;
  border-bottom: 1px solid #777;
`;

const Options = styled.div`
  display: flex;
  justify-content: space-between;
  margin-top: 8px;
`;

const Scales = styled.div`
  display: flex;
  flex-direction: column;
  gap: 2px;
  width: 60px;
`;

const DeviceRow = styled.div`
  display: flex;
  justify-content: space-between;
  align-items: center;

  ${Button} {
    width: 77px;
  }
`;

const PaletteRow = styled.div`
  display: flex;
  align-items: center;
  flex: none;
  height: 29px;
  padding-bottom: 2px;
  border-bottom: 1px solid #c0c0c0;
`;

const PaletteGrip = styled.div`
  display: flex;
  flex-direction: column;
  align-items: center;
  gap: 4px;
  width: 16px;
  padding-right: 4px;

  i {
    width: 4px;
    height: 7px;
    border: 1px solid #c0c0c0;
    border-top: none;
  }
`;

const Colors = styled.div`
  display: flex;
  gap: 2px;
  width: 424px;
`;

const ColorButton = styled.button`
  flex: 1;
  height: 21px;
  border: 1px solid #b4b4b4;
  background: ${(p) => p.$color};
`;

const Status = styled.footer`
  display: flex;
  gap: 2px;
  flex: none;
  height: 15px;
  font-family: Roboto, sans-serif;
  font-size: 10px;
  line-height: 13px;
`;

const StatusCell = styled.div`
  flex: ${(p) => (p.$grow ? "1" : "none")};
  width: ${(p) => p.$width}px;
  padding-left: 1px;
  border: 1px solid #b8b8b8;
  border-bottom-color: #fff;
  white-space: nowrap;
  overflow: hidden;
`;

const Tasks = styled.footer`
  display: flex;
  flex: none;
  height: 25px;
  background: #101010;
  color: #fff;
`;

const Task = styled.button`
  display: flex;
  justify-content: center;
  align-items: center;
  width: 31px;
  background: ${(p) => (p.$active ? "#333" : "none")};
  border-bottom: 2px solid ${(p) => (p.$open ? "#e0a080" : "transparent")};
`;

const Tray = styled.div`
  display: flex;
  align-items: center;
  margin-left: auto;
  padding-right: 14px;
  font-family: Roboto, sans-serif;
  font-size: 10px;

  span {
    margin-left: 4px;
  }
  time {
    margin: 0 8px 0 9px;
  }
`;

const TrayButton = styled.button`
  display: flex;
  justify-content: center;
  width: 27px;
`;
